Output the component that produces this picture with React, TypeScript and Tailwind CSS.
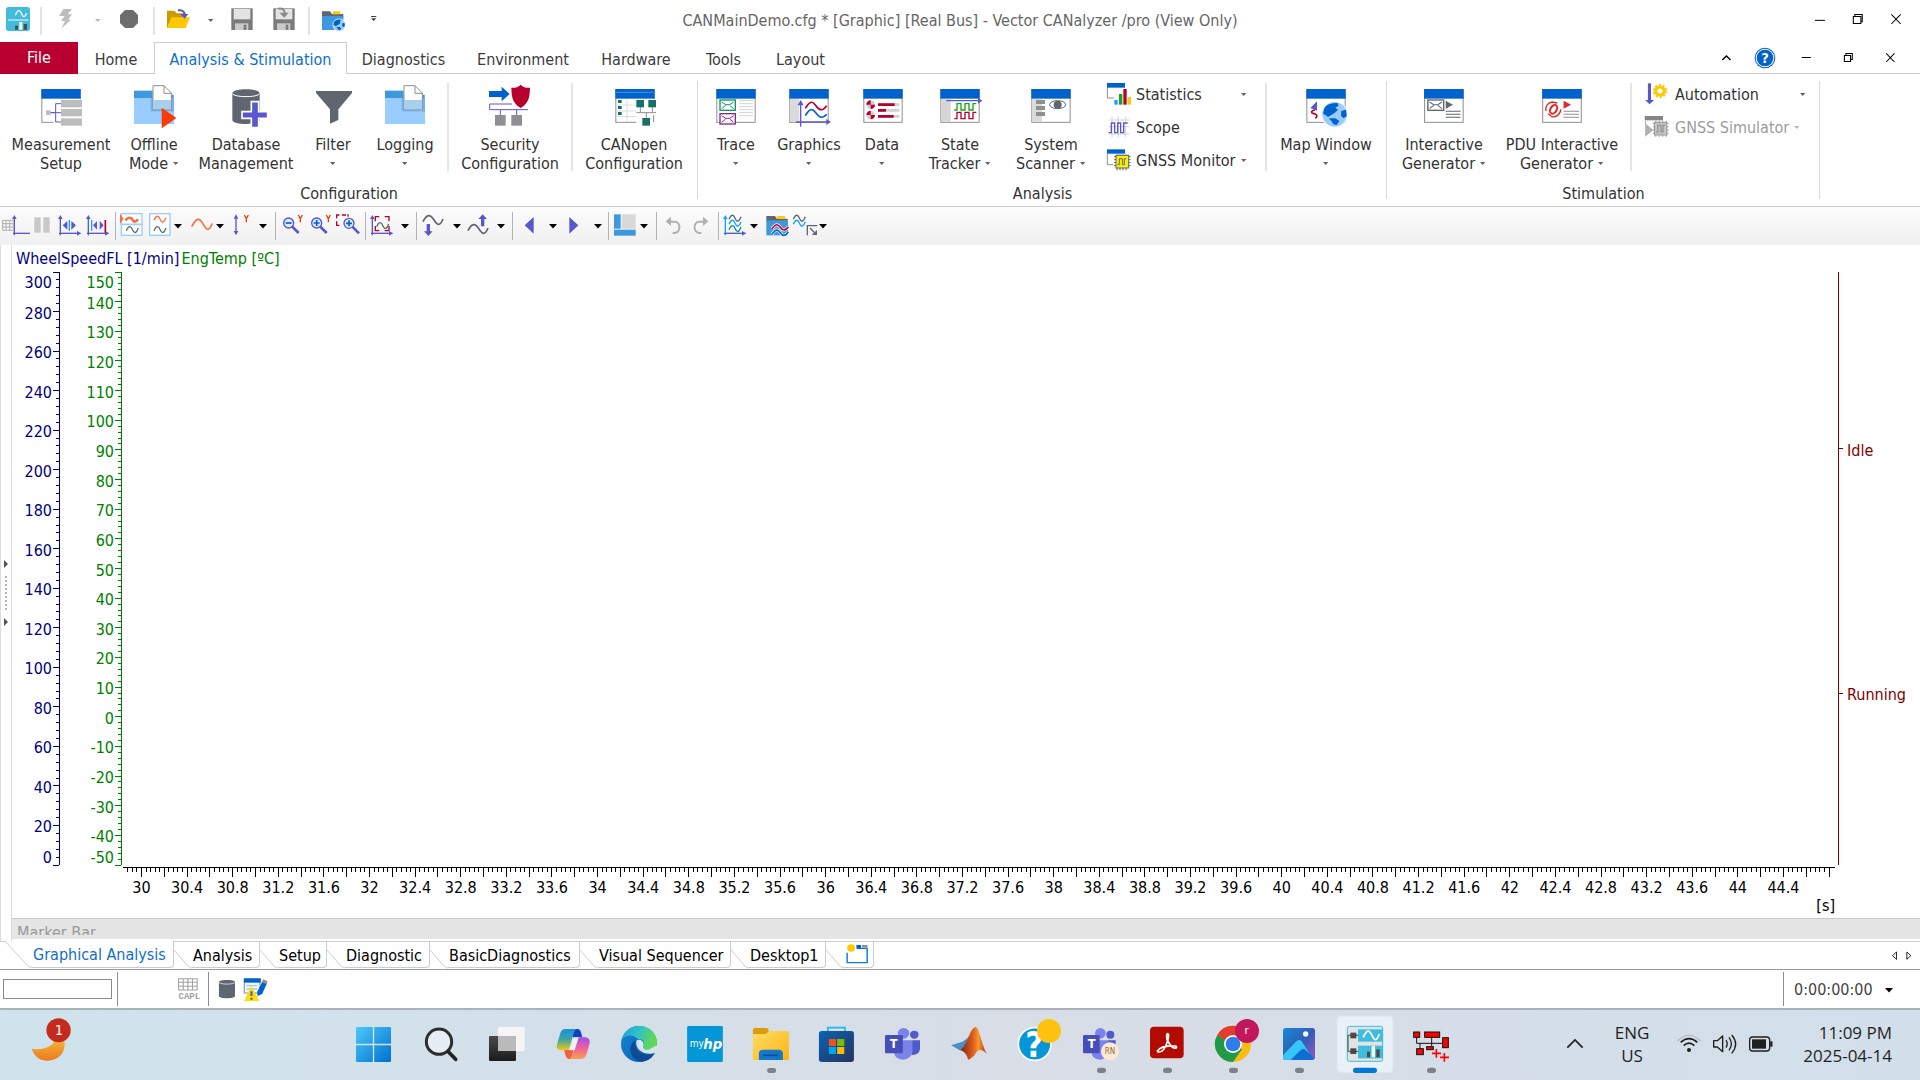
import React from "react";

type Kids = { children?: React.ReactNode };

const BLUE = "#0062cc";
const VIOLET = "#5a57cc";
const GRAY = "#8f8f8f";
const SLATE = "#5f6670";
const RED = "#b8002e";
const SKY = "#99ccff";
const MID = "#3d98de";

/* Icon artwork lives on a few shared drawing sheets, three units to a pixel. */
const SHEETS = {
  a: [0, 0, 3],
  b: [440, 0, 3],
  c: [900, 0, 3],
  d: [1380, 0, 2.904],
  e: [0, 780, 2.8],
  f: [560, 840, 2.8],
  g: [1000, 900, 3],
  h: [1480, 840, 3],
  i: [340, 1005, 3],
} as const;

function Art({ at, on, label, children }: Kids & { at: number[]; on: keyof typeof SHEETS; label?: React.ReactNode }) {
  const [x, y, w, h] = at;
  const [ox, oy, k] = SHEETS[on];
  return (
    <svg width={w} height={h} viewBox={`${(x - ox) * 3} ${(y - oy) * 3} ${w * 3} ${h * 3}`} className="block shrink-0" aria-hidden="true">
      <g transform={k === 3 ? undefined : `scale(${3 / k} 1)`}>{children}</g>
      {label}
    </svg>
  );
}

const P = (p: { d: string; f?: string; s?: string; w?: number; round?: boolean }) => (
  <path
    d={p.d}
    fill={p.f ?? "none"}
    stroke={p.s ?? "none"}
    strokeWidth={p.w ?? 3}
    strokeLinecap={p.round ? "round" : "butt"}
    strokeLinejoin={p.round ? "round" : "miter"}
  />
);
const R = (p: { x: number; y: number; w: number; h: number; f?: string; s?: string; sw?: number; rx?: number }) => (
  <rect x={p.x} y={p.y} width={p.w} height={p.h} fill={p.f ?? "none"} stroke={p.s} strokeWidth={p.sw ?? 3} rx={p.rx} />
);
const Win = ({ x, w = 118 }: { x: number; w?: number }) => (
  <>
    <R x={x + 1.5} y={270} w={w - 3} h={97} f="#fff" s={GRAY} />
    <R x={x} y={267} w={w} h={29} f={BLUE} />
  </>
);
const Globe = ({ cx, cy, r }: { cx: number; cy: number; r: number }) => (
  <g transform={`translate(${cx} ${cy}) scale(${r / 37})`}>
    <circle r="40" fill="#fff" />
    <circle r="37" fill={SKY} />
    <path d="M-31-18C-22-32-8-34 8-34L12-26 2-20 10-14 0-4-10 2-20 8-28 2-35-2ZM-18 12 2 12 14 20 6 32-4 30-10 20ZM20-10 34-14 36 6 26 12 19 4Z" fill={BLUE} />
  </g>
);

const SmallCaret = ({ pale }: { pale?: boolean }) => (
  <svg width="6" height="4" viewBox="0 0 6 4" className={pale ? "text-[#b8b8b8]" : "text-[#666666]"} aria-hidden="true">
    <path d="M0 0h5.4L2.7 3z" fill="currentColor" />
  </svg>
);
const DropCaret = () => (
  <svg width="8" height="5" viewBox="0 0 8 5" aria-hidden="true">
    <path d="M0 0h8L4 4.4z" fill="#000" />
  </svg>
);

/* ---------- title bar ---------- */

const QuickSep = () => <div className="h-7 w-[2px] self-center bg-[#e3e3e3]" />;

function TitleBar() {
  return (
    <header className="grid h-[42px] grid-cols-[1fr_auto_1fr]">
      <div className="flex">
        <Art on="a" at={[0, 0, 40, 42]}>
          <R x={18} y={21} w={72} h={72} f="#41bcdc" rx={8} />
          <P d="M46 46c8-20 14-16 19-4s10 10 15-2" s="#fff" w={4} />
          <P d="M24 60h62" s="#cfe9f0" w={4} />
          <R x={45} y={77} w={9} h={12} f="#4a4a4a" />
          <R x={58} y={66} w={9} h={23} f="#fff" />
          <R x={71} y={72} w={10} h={17} f="#4a4a4a" />
        </Art>
        <QuickSep />
        <button aria-label="Start measurement">
          <Art on="a" at={[42, 0, 46, 42]}>
            <P d="M190 27h26l-13 16h13l-12 16h9L185 85l10-22h-12l11-15h-17z" f="#bdbdbd" />
          </Art>
        </button>
        <button aria-label="Start options" className="flex w-5 items-center justify-center"><SmallCaret pale /></button>
        <button aria-label="Stop">
          <Art on="a" at={[108, 0, 45, 42]}>
            <P d="M375 30h24l15 15v24l-15 15h-24l-15-15V45z" f="#6d6d6d" />
          </Art>
        </button>
        <QuickSep />
        <button aria-label="Open">
          <Art on="a" at={[155, 0, 45, 42]}>
            <P d="M501 84V32h22l7 8h28v44z" f="#cc9a00" />
            <P d="M514 52h56l-13 32h-56z" f="#ffc800" />
            <P d="M534 31c14-1 20 4 20 14" s={VIOLET} w={6} />
            <P d="M541 42h24l-11 14z" f={VIOLET} />
          </Art>
        </button>
        <button aria-label="Recent files" className="flex w-[21px] items-center justify-center"><SmallCaret /></button>
        <button aria-label="Save">
          <Art on="a" at={[221, 0, 42, 42]}>
            <R x={694} y={25} w={64} h={65} f="#7b7b7b" />
            <R x={701} y={27} w={50} h={31} f="#e3e3e3" />
            <R x={705} y={70} w={40} h={20} f="#c9c9c9" />
            <R x={731} y={74} w={8} h={16} f="#7b7b7b" />
          </Art>
        </button>
        <button aria-label="Save as">
          <Art on="a" at={[263, 0, 45, 42]}>
            <R x={820} y={25} w={64} h={65} f="#7b7b7b" />
            <R x={827} y={27} w={50} h={31} f="#e3e3e3" />
            <R x={831} y={70} w={40} h={20} f="#c9c9c9" />
            <R x={857} y={74} w={8} h={16} f="#7b7b7b" />
            <P d="M834 26c14-2 20 3 20 14" s="#8a8a8a" w={6} />
            <P d="M838 38h28l-13 15z" f="#8a8a8a" />
          </Art>
        </button>
        <QuickSep />
        <button aria-label="Online workspace">
          <Art on="a" at={[310, 0, 48, 42]}>
            <P d="M966 34h24l6 8h34v10h-64z" f={SLATE} />
            <R x={998} y={34} w={23} h={9} f="#ffc800" />
            <R x={966} y={48} w={64} h={42} f={MID} />
            <Globe cx={1017} cy={75} r={18} />
          </Art>
        </button>
        <button aria-label="Customize toolbar">
          <Art on="a" at={[358, 0, 30, 42]}>
            <R x={1113} y={48} w={16} h={3} f="#444" />
            <P d="M1113 55h16l-8 8z" f="#444" />
          </Art>
        </button>
      </div>
      <h1 className="self-center text-base text-[#666666]">CANMainDemo.cfg * [Graphic] [Real Bus] - Vector CANalyzer /pro (View Only)</h1>
      <div className="flex justify-end">
        <button aria-label="Minimize"><Art on="d" at={[1801, 0, 38, 42]}><P d="M1263 61h29" s="#000" /></Art></button>
        <button aria-label="Restore">
          <Art on="d" at={[1839, 0, 38, 42]}><P d="M1374.500 49.500h22v21h-22zM1379 49v-5.500h21.500v22H1397" s="#000" /></Art>
        </button>
        <button aria-label="Close"><Art on="d" at={[1877, 0, 43, 42]}><P d="M1485 43l27 29M1512 43l-27 29" s="#000" /></Art></button>
      </div>
    </header>
  );
}

/* ---------- ribbon tabs ---------- */

const TABS = [
  { t: "Diagnostics", c: "w-[113px]" },
  { t: "Environment", c: "w-[126px]" },
  { t: "Hardware", c: "w-[100px]" },
  { t: "Tools", c: "w-[75px]" },
  { t: "Layout", c: "w-[79px]" },
];

function TabRow() {
  return (
    <nav className="flex h-8 text-base text-[#3b3b3b]">
      <button className="w-[78px] bg-[#b70030] text-white">File</button>
      <button className="w-[76px] border-b border-[#cfcfcf] pt-1">Home</button>
      <button className="w-[193px] border border-b-0 border-[#cfcfcf] pt-[2px] text-[#0f6fc9]">Analysis &amp; Stimulation</button>
      {TABS.map((x) => (
        <button key={x.t} className={`border-b border-[#cfcfcf] pt-1 ${x.c}`}>{x.t}</button>
      ))}
      <div className="flex flex-1 justify-end border-b border-[#cfcfcf]">
        <button aria-label="Collapse ribbon"><Art on="d" at={[1708, 42, 38, 31]}><P d="M994 180l12-12 12 12" s="#000" w={4} /></Art></button>
        <button aria-label="Help">
          <Art on="d" at={[1746, 42, 38, 31]} label={<text x={1155} y={190} textAnchor="middle" fontSize="44" fontWeight="bold" fill="#fff">?</text>}>
            <ellipse cx="1118" cy="174" rx="30" ry="31" fill={BLUE} />
            <ellipse cx="1118" cy="174" rx="25.500" ry="26.500" fill={BLUE} stroke="#fff" strokeWidth="3" />
          </Art>
        </button>
        <button aria-label="Minimize window"><Art on="d" at={[1784, 42, 43, 31]}><P d="M1225 172.500h26" s="#000" /></Art></button>
        <button aria-label="Restore window">
          <Art on="d" at={[1827, 42, 42, 31]}><P d="M1348.500 166.500h18v18h-18zM1353 166v-5.500h18.500v18H1367" s="#000" /></Art>
        </button>
        <button aria-label="Close window"><Art on="d" at={[1869, 42, 51, 31]}><P d="M1470 160l24 26M1494 160l-24 26" s="#000" /></Art></button>
      </div>
    </nav>
  );
}

/* ---------- ribbon ---------- */

function Big({ cls, top, bottom, caret, children }: Kids & { cls: string; top: string; bottom?: string; caret?: boolean }) {
  return (
    <button className={`flex flex-col items-center pt-[10px] text-base leading-[19px] whitespace-nowrap ${cls}`}>
      {children}
      <span className="mt-[7px]">{top}</span>
      <span className="flex h-[19px] items-center gap-[5px]">{bottom}{caret && <SmallCaret />}</span>
    </button>
  );
}
const Sep = ({ cls }: { cls: string }) => <div className={`mt-[9px] h-[88px] w-[2px] bg-[#e5e5e5] ${cls}`} />;
function Group({ name, children }: Kids & { name: string }) {
  return (
    <section className="relative flex flex-col after:absolute after:right-0 after:top-[7px] after:h-[118px] after:w-px after:bg-[#dadada]">
      <div className="flex h-[108px]">{children}</div>
      <h2 className="text-center text-base leading-6">{name}</h2>
    </section>
  );
}
function Small({ label, caret, pale, cls, children }: Kids & { label: string; caret?: boolean; pale?: boolean; cls: string }) {
  return (
    <button className={`flex h-[33px] items-center gap-[3px] text-base whitespace-nowrap ${cls} ${pale ? "text-[#9b9b9b]" : ""}`} disabled={pale}>
      {children}
      {label}
      {caret && <span className="ml-auto"><SmallCaret pale={pale} /></span>}
    </button>
  );
}

const FolderPage = ({ x }: { x: number }) => (
  <g transform={`translate(${x} 0)`}>
    <R x={0} y={272} w={56} h={22} f={MID} />
    <R x={0} y={294} w={120} h={78} f={SKY} />
    <R x={112} y={284} w={7} h={50} f={MID} />
    <R x={50} y={294} w={70} h={40} f="#6fb4ec" />
    <P d="M57 257h33l22 22v50H57z" f="#fff" s={GRAY} />
    <R x={58} y={300} w={53} h={28} f="#a6d0ee" />
    <P d="M90 257v23h22" s={GRAY} />
  </g>
);
const Envelope = ({ x, y, c }: { x: number; y: number; c: string }) => (
  <g transform={`translate(${x} ${y})`}>
    <R x={1} y={1} w={46} h={31} f="#fff" s={c} sw={4} />
    <P d="M6 7l12 8h12l12-8M6 27l12-10M42 27L30 17" s={c} />
  </g>
);

function Ribbon() {
  return (
    <div className="flex h-[133px] border-b border-[#cfcfcf] text-[#333333]">
      <Group name="Configuration">
        <Big cls="ml-2 w-[106px]" top="Measurement" bottom="Setup">
          <Art on="a" at={[39, 84, 44, 44]}>
            <Win x={124} />
            <R x={160} y={298} w={90} h={75} f="#fff" />
            <P d="M138 338h28M183 311h-16v55h16M152 338h31" s={VIOLET} />
            <R x={138} y={331} w={14} h={14} f="#bdbdbd" />
            <R x={183} y={300} w={63} h={22} f="#bdbdbd" />
            <R x={183} y={327} w={63} h={22} f="#bdbdbd" />
            <R x={183} y={355} w={63} h={22} f="#bdbdbd" />
          </Art>
        </Big>
        <Big cls="w-20" top="Offline" bottom="Mode" caret>
          <Art on="a" at={[132, 84, 44, 44]}>
            <FolderPage x={402} />
            <P d="M485 323l44 31-44 31z" f="#ff3a00" />
          </Art>
        </Big>
        <Big cls="w-26" top="Database" bottom="Management">
          <Art on="a" at={[224, 84, 44, 44]}>
            <P d="M697 280c0-16 82-16 82 0v80c0 16-82 16-82 0z" f={SLATE} />
            <P d="M697 281c6 12 76 12 82 0" s="#fff" />
            <P d="M754 305h22v30h27v20h-27v28h-22v-28h-28v-20h28z" f={VIOLET} s="#fff" w={5} />
          </Art>
        </Big>
        <Big cls="w-[70px]" top="Filter" caret>
          <Art on="a" at={[311, 84, 44, 44]}><P d="M948 273h108v6l-41 49v32l-25 11v-43l-42-49z" f={SLATE} /></Art>
        </Big>
        <Big cls="w-[74px]" top="Logging" caret>
          <Art on="a" at={[383, 84, 44, 44]}><FolderPage x={1155} /></Art>
        </Big>
        <Sep cls="ml-[5px]" />
        <Big cls="ml-[5px] w-28" top="Security" bottom="Configuration">
          <Art on="b" at={[488, 84, 44, 44]}>
            <P d="M147 273h38v-13l24 22-24 22v-13h-38z" f={BLUE} />
            <P d="M216 312h-67v17h115M181 330v20M230 330v20" s={VIOLET} />
            <P d="M242 254c8 8 18 10 28 9-1 20 0 45-28 61-28-16-27-41-28-61 10 1 20-1 28-9z" f={RED} />
            <R x={165} y={345} w={32} h={32} f={GRAY} />
            <R x={214} y={345} w={32} h={32} f={GRAY} />
          </Art>
        </Big>
        <Sep cls="ml-[5px]" />
        <Big cls="ml-[5px] mr-2 w-[112px]" top="CANopen" bottom="Configuration">
          <Art on="b" at={[611, 84, 44, 44]}>
            <Win x={523} />
            <P d="M526 277h112" s="#4d92dd" />
            <P d="M558 298v66M528 315h60M528 333h60M528 350h60" s="#dcdcdc" />
            <R x={586} y={298} w={60} h={80} f="#fff" />
            <P d="M598 320v18M634 320v18M586 338h59M616 338v18M638 345v22" s={GRAY} />
            <R x={531} y={300} w={11} h={9} f="#167068" />
            <R x={531} y={318} w={11} h={9} f="#167068" />
            <R x={531} y={336} w={11} h={9} f="#167068" />
            <R x={586} y={300} w={23} h={22} f="#167068" />
            <R x={622} y={300} w={23} h={22} f="#167068" />
            <R x={604} y={354} w={23} h={23} f="#167068" />
          </Art>
        </Big>
      </Group>

      <Group name="Analysis">
        <Big cls="ml-[5px] w-[66px]" top="Trace" caret>
          <Art on="b" at={[714, 84, 44, 44]}>
            <Win x={829} />
            <P d="M897 302h42M897 311h42M897 320h42M897 329h42M897 338h42M897 347h42" s="#d4d4d4" />
            <Envelope x={839} y={299} c="#12935a" />
            <Envelope x={839} y={340} c="#852a8c" />
          </Art>
        </Big>
        <Big cls="w-20" top="Graphics" caret>
          <Art on="b" at={[787, 84, 44, 44]}>
            <Win x={1048} />
            <R x={1052} y={297} w={26} h={68} f="#dadada" />
            <P d="M1082 380v-66M1068 366h96" s={VIOLET} w={4} />
            <P d="M1082 300l9 16h-18zM1173 366l-14-9v18z" f={VIOLET} />
            <P d="M1096 325c12-20 20-24 30-10s20 22 34 2" s={RED} w={5} />
            <P d="M1096 347c12-20 20-24 30-10s20 22 34 6" s={BLUE} w={5} />
          </Art>
        </Big>
        <Big cls="w-[66px]" top="Data" caret>
          <Art on="b" at={[860, 84, 44, 44]}>
            <Win x={1270} />
            <circle cx="1292" cy="314" r="13" fill="#d0d0d0" />
            <circle cx="1292" cy="345" r="13" fill="#d0d0d0" />
            <P d="M1292 314v-13a13 13 0 0 0-13 13zM1292 314h13a13 13 0 0 1-13 13zM1292 345v-13a13 13 0 0 0-13 13zM1292 345h13a13 13 0 0 1-13 13z" f={RED} />
            <P d="M1314 314h64M1314 331h64M1314 349h64" s="#d0d0d0" w={8} />
            <P d="M1314 314h50M1314 331h24M1314 349h47" s={RED} w={8} />
          </Art>
        </Big>
        <Big cls="w-[90px]" top="State" bottom="Tracker" caret>
          <Art on="c" at={[939, 84, 45, 44]}>
            <Win x={124} />
            <R x={128} y={297} w={27} h={68} f="#d6d6d6" />
            <P d="M142 302h98" s={VIOLET} w={4} />
            <P d="M237 293l13 9-13 9z" f={VIOLET} />
            <P d="M166 330h8v-19h12v19h12v-19h12v19h12v-19h10" s="#12a818" w={4} />
            <P d="M166 356h8v-19h12v19h12v-19h12v19h12v-19h10" s={RED} w={4} />
          </Art>
        </Big>
        <Big cls="w-[92px]" top="System" bottom="Scanner" caret>
          <Art on="c" at={[1029, 84, 44, 44]}>
            <Win x={394} />
            <R x={398} y={297} w={28} h={68} f="#dadada" />
            <R x={408} y={300} w={27} h={12} f={GRAY} />
            <R x={408} y={318} w={27} h={12} f={GRAY} />
            <R x={408} y={336} w={27} h={12} f={GRAY} />
            <ellipse cx="473" cy="314" rx="24" ry="12" fill="#fff" stroke={SLATE} strokeWidth="3" />
            <ellipse cx="473" cy="314" rx="12" ry="12" fill={SLATE} />
          </Art>
        </Big>
        <div className="ml-[6px] pt-1">
          <Small label="Statistics" caret cls="w-36">
            <Art on="c" at={[1103, 78, 30, 33]}>
              <P d="M622 262v32h20" s={GRAY} />
              <R x={621} y={249} w={54} h={14} f={BLUE} />
              <R x={643} y={300} w={10} h={14} f="#18a0ff" />
              <R x={657} y={282} w={10} h={32} f="#12a818" />
              <R x={670} y={267} w={10} h={47} f={RED} />
              <R x={683} y={291} w={10} h={23} f="#ffc800" />
            </Art>
          </Small>
          <Small label="Scope" cls="w-36">
            <Art on="c" at={[1103, 111, 30, 33]}>
              <P d="M626 360h62M626 380h62M626 402h62M636 350v62M655 350v62M676 350v62" s="#d2d2d2" />
              <P d="M626 398h8v-29h10v29h9v-29h9v29h9v-29h12" s={VIOLET} w={4} />
            </Art>
          </Small>
          <Small label="GNSS Monitor" caret cls="w-36">
            <Art on="c" at={[1103, 144, 30, 33]}>
              <P d="M622 460v34h18" s={GRAY} />
              <R x={621} y={448} w={54} h={13} f={BLUE} />
              <P d="M642 470h50M642 479h50M642 488h50M642 497h50M651 463v48M660 463v48M669 463v48M678 463v48" s={SLATE} />
              <R x={648} y={466} w={38} h={38} f="#ffee00" s={SLATE} />
              <P d="M652 494h6v-18h9v18h6v-18h6" s={SLATE} />
            </Art>
          </Small>
        </div>
        <Sep cls="ml-[18px]" />
        <Big cls="ml-[5px] mr-[7px] w-[108px]" top="Map Window" caret>
          <Art on="c" at={[1303, 84, 44, 44]}>
            <Win x={1216} />
            <P d="M1228 324l20-20v28z" f={VIOLET} />
            <P d="M1242 330c-14 2-12 9-3 11s12 8 4 14" s={RED} w={5} />
            <Globe cx={1301} cy={343} r={37} />
          </Art>
        </Big>
      </Group>

      <Group name="Stimulation">
        <Big cls="ml-[6px] w-[102px]" top="Interactive" bottom="Generator" caret>
          <Art on="d" at={[1422, 84, 44, 44]}>
            <Win x={128} w={115} />
            <Envelope x={138} y={299} c={SLATE} />
            <P d="M191 302l21 12-21 12z" f={SLATE} />
            <P d="M191 334h43M191 343h43M191 352h43" s={SLATE} />
          </Art>
        </Big>
        <Big cls="w-[134px]" top="PDU Interactive" bottom="Generator" caret>
          <Art on="d" at={[1540, 84, 44, 44]}>
            <Win x={471} w={115} />
            <P d="M500 306c-14 3-21 14-18 27M497 350c14 3 27-6 28-22M515 309l-16-3M488 341l10 8" s="#dd2a2a" w={4} />
            <ellipse cx="504" cy="328" rx="9" ry="14" fill="none" stroke="#dd2a2a" strokeWidth="6" transform="rotate(28 504 328)" />
            <P d="M533 302l22 12-22 12z" f="#dd2a2a" />
            <P d="M533 334h45M533 343h45M533 352h45" s={GRAY} />
          </Art>
        </Big>
        <Sep cls="ml-px" />
        <div className="mr-[14px] ml-2 pt-1">
          <Small label="Automation" caret cls="w-[166px]">
            <Art on="d" at={[1640, 78, 32, 33]}>
              <R x={778} y={250} w={9} h={52} f={VIOLET} />
              <P d="M770 300h26l-13 13z" f={VIOLET} />
              <circle cx="813" cy="273" r="18" fill="none" stroke="#ffc800" strokeWidth="6" strokeDasharray="6 5.300" />
              <circle cx="813" cy="273" r="12" fill="none" stroke="#ffc800" strokeWidth="9" />
            </Art>
          </Small>
          <Small label="GNSS Simulator" caret pale cls="w-[160px]">
            <Art on="d" at={[1640, 111, 32, 33]}>
              <R x={769} y={348} w={53} h={13} f="#858585" />
              <P d="M770 370l24 20-24 20z" f="#b0b0b0" />
              <P d="M771 362v12" s="#b0b0b0" />
              <P d="M792 370h46M792 380h46M792 390h46M792 400h46M801 362v48M811 362v48M821 362v48M831 362v48" s="#9a9a9a" />
              <R x={797} y={367} w={36} h={38} f="#c4c4c4" s="#9a9a9a" />
              <P d="M801 396h6v-20h9v20h6v-20h6" s="#8a8a8a" />
            </Art>
          </Small>
        </div>
      </Group>
    </div>
  );
}

/* ---------- graphic window toolbar ---------- */

function Tool({ name, x, w, on = "a", children }: Kids & { name: string; x: number; w: number; on?: "a" | "b" }) {
  return <button aria-label={name}><Art on={on} at={[x, 207, w, 38]}>{children}</Art></button>;
}
const Drop = ({ cls }: { cls: string }) => (
  <button aria-label="More options" className={`flex items-center justify-center ${cls}`}><DropCaret /></button>
);
const ToolSep = () => <div className="h-7 w-px self-center bg-[#b4b4b4]" />;
const Axes = ({ x, c = VIOLET }: { x: number; c?: string }) => (
  <g transform={`translate(${x} 0)`}>
    <P d="M7 706v-54" s={c} w={4} />
    <P d="M7 645l7 12H0z" f={c} />
    <P d="M3 700h58" s={VIOLET} w={4} />
    <P d="M70 700l-13-7v14z" f={VIOLET} />
  </g>
);
const Lens = ({ x, y, plus }: { x: number; y: number; plus?: boolean }) => (
  <g transform={`translate(${x} ${y})`}>
    <P d="M10 10l20 20" s={VIOLET} w={8} />
    <circle r="15" fill="#dbe9fa" stroke={VIOLET} strokeWidth="4" />
    <P d={plus ? "M-9 0H9M0-9V9" : "M-9 0H9"} s={BLUE} w={5} />
  </g>
);
const YMark = ({ x, y }: { x: number; y: number }) => <P d={`M${x} ${y}l6 11v11M${x + 12} ${y}l-6 11`} s="#e8400c" w={4} />;
const wave = (x: number, y: number) => `M${x} ${y}c8 -18 14 -14 19 -2s11 10 17 -6`;

function Toolbar() {
  return (
    <div className="flex h-[38px] bg-linear-to-b from-[#fcfcfc] to-[#f0f0f0]">
      <Tool name="Legend" x={0} w={30}>
        <Axes x={36} />
        <P d="M8 661h32v30H8zM8 671h32M8 681h32M18 661v30M29 661v30" s="#b0b0b0" f="#f4f4f4" />
      </Tool>
      <Tool name="Pause" x={30} w={26}>
        <R x={103} y={652} w={19} h={46} f="#c8c8c8" />
        <R x={130} y={652} w={19} h={46} f="#c8c8c8" />
      </Tool>
      <Tool name="Fit time axis" x={56} w={28}>
        <Axes x={174} />
        <P d="M208 660v32" s="#18a0ff" w={4} />
        <P d="M202 663v26l-14-13zM214 663v26l14-13z" f={VIOLET} />
      </Tool>
      <Tool name="Time range" x={84} w={31}>
        <Axes x={258} />
        <P d="M275 660v32" s="#18a0ff" w={4} />
        <P d="M316 660v38" s={RED} w={5} />
        <P d="M291 663v26l-12-13zM299 663v26l12-13z" f={VIOLET} />
      </Tool>
      <ToolSep />
      <Tool name="Split signals" x={116} w={30}>
        <R x={364} y={641} w={62} h={65} f="#fff" s={SKY} sw={4} />
        <P d="M362 673h66" s={SKY} w={5} />
        <P d="M376 661c10-12 18-8 22-1s10 7 16-2" s="#f87040" w={8} />
        <P d="M360 641l11 15-11 15z" f="#f87040" />
        <P d={wave(379, 692)} s={SLATE} w={4} />
      </Tool>
      <Tool name="Signal layout" x={146} w={26}>
        <R x={449} y={641} w={61} h={65} f="#fff" s={SKY} sw={4} />
        <P d={wave(462, 661)} s="#f87040" w={4} />
        <P d={wave(462, 692)} s={SLATE} w={4} />
      </Tool>
      <Drop cls="w-3" />
      <Tool name="Curve style" x={184} w={30}>
        <P d="M576 678c14-24 22-26 32-8s18 28 28 2" s="#f87040" w={5} round />
      </Tool>
      <Drop cls="w-3" />
      <Tool name="Y axis" x={226} w={30}>
        <P d="M708 652v46" s={VIOLET} w={4} />
        <P d="M708 643l7 13h-14zM708 706l7-13h-14z" f={VIOLET} />
        <YMark x={733} y={645} />
      </Tool>
      <Drop cls="w-[13px]" />
      <div className="w-[6px]" />
      <ToolSep />
      <Tool name="Zoom out Y" x={276} w={30}><Lens x={866} y={669} /><YMark x={895} y={645} /></Tool>
      <Tool name="Zoom in Y" x={306} w={28}><Lens x={950} y={669} plus /><YMark x={979} y={645} /></Tool>
      <Tool name="Zoom area" x={334} w={31}>
        <P d="M1018 645h-8v10M1026 645h12M1044 650v-5h-2M1010 664v12h8" s={RED} w={4} />
        <Lens x={1047} y={670} plus />
      </Tool>
      <ToolSep />
      <Tool name="Fit window" x={366} w={33}>
        <Axes x={1110} />
        <P d="M1126 664v-14h12M1154 650h13v14M1126 678v14h12M1154 692h13v-14" s={RED} w={4} />
        <P d={wave(1130, 680)} s={SLATE} w={4} />
      </Tool>
      <Drop cls="w-3" />
      <div className="w-[5px]" />
      <ToolSep />
      <Tool name="Sample down" x={417} w={33}>
        <P d="M1269 665c12-24 22-22 31-8s18 28 29 0" s={SLATE} w={5} />
        <P d="M1280 672h10v22h8l-13 14-13-14h8z" f={VIOLET} />
      </Tool>
      <Drop cls="w-[13px]" />
      <Tool on="b" name="Sample up" x={463} w={32}>
        <P d="M84 692c12-24 22-22 31-8s18 28 29 0" s={SLATE} w={5} />
        <P d="M123 679v-22h-8l13-14 13 14h-8v22z" f={VIOLET} />
      </Tool>
      <Drop cls="w-3" />
      <div className="w-[5px]" />
      <ToolSep />
      <Tool on="b" name="Previous" x={513} w={34}><P d="M281 651v50l-27-25z" f={VIOLET} /></Tool>
      <Drop cls="w-3" />
      <Tool on="b" name="Next" x={559} w={33}><P d="M388 651v50l27-25z" f={VIOLET} /></Tool>
      <Drop cls="w-3" />
      <div className="w-1" />
      <ToolSep />
      <Tool on="b" name="Window layout" x={609} w={29}>
        <R x={522} y={643} w={20} h={43} f={MID} />
        <R x={545} y={643} w={42} h={43} f="#d9d9d9" />
        <R x={522} y={689} w={65} h={18} f={MID} />
      </Tool>
      <Drop cls="w-[11px]" />
      <div className="w-[7px]" />
      <ToolSep />
      <Tool on="b" name="Undo" x={657} w={30}>
        <P d="M690 665h14c18 0 20 32 0 34h-6" s="#b0b0b0" w={6} />
        <P d="M693 650v28l-16-14z" f="#b0b0b0" />
      </Tool>
      <Tool on="b" name="Redo" x={687} w={31}>
        <P d="M792 665h-14c-18 0-20 32 0 34h6" s="#b0b0b0" w={6} />
        <P d="M789 650v28l16-14z" f="#b0b0b0" />
      </Tool>
      <ToolSep />
      <Tool on="b" name="Signal axes" x={719} w={29}>
        <Axes x={849} c="#18a0ff" />
        <P d={wave(867, 658)} s={SLATE} w={4} />
        <P d={wave(867, 673)} s="#18a0ff" w={4} />
        <P d={wave(867, 689)} s="#0a8f7d" w={4} />
      </Tool>
      <Drop cls="w-3" />
      <Tool on="b" name="Save signals" x={760} w={31}>
        <P d="M979 648h26l6 8h32v8h-64z" f={SLATE} />
        <R x={1010} y={648} w={25} h={9} f="#ffc800" />
        <R x={979} y={661} w={65} h={45} f={MID} />
        <P d="M996 686c12-16 18-14 25-4s14 12 24-2M996 702c12-16 18-14 25-4s14 12 24-2" s="#fff" w={9} />
        <P d="M996 686c12-16 18-14 25-4s14 12 24-2" s={RED} w={5} />
        <P d="M996 702c12-16 18-14 25-4s14 12 24-2" s={BLUE} w={5} />
      </Tool>
      <Tool on="b" name="Export signals" x={791} w={28}>
        <P d={wave(1060, 658)} s={SLATE} w={4} />
        <P d={wave(1060, 673)} s="#18a0ff" w={4} />
        <P d="M1102 706v-29h30M1110 684l14 14" s={SLATE} w={4} />
        <P d="M1131 705h-16l16-15z" f={SLATE} />
      </Tool>
      <Drop cls="w-2" />
    </div>
  );
}

/* ---------- chart ---------- */

function YAxis({ lo, hi, major, color, width, pad }: { lo: number; hi: number; major: number; color: string; width: string; pad: number }) {
  const n = ((hi - lo) / major) * 5;
  return (
    <svg className={`h-full overflow-visible ${width}`} aria-label={`Axis ${lo} to ${hi}`}>
      <g stroke={color} shapeRendering="crispEdges">
        <line x1="100%" x2="100%" y1="0" y2="100%" />
        {Array.from({ length: n + 1 }, (_, i) => (
          <svg key={i} x="100%" y={`${(i / n) * 100}%`} className="overflow-visible">
            <line x1={i % 5 ? -3 : -6} x2="0" y1="0" y2="0" />
          </svg>
        ))}
      </g>
      {Array.from({ length: n / 5 + 1 }, (_, i) => (
        <svg key={i} x="100%" y={`${((i * 5) / n) * 100}%`} className="overflow-visible">
          <text x={-pad} y={i === 0 ? 16 : i === n / 5 ? -2 : 7} textAnchor="end" fontSize="16" fill={color}>{hi - i * major}</text>
        </svg>
      ))}
    </svg>
  );
}

function TimeAxis() {
  const lo = 29.838;
  const span = 15.014;
  const pos = (v: number) => `${((v - lo) / span) * 100}%`;
  const ticks = Array.from({ length: 374 }, (_, i) => i - 3);
  return (
    <svg className="h-8 w-full overflow-visible" aria-label="Time axis in seconds">
      <g stroke="#000" shapeRendering="crispEdges">
        <line x1="0" x2="100%" y1="1" y2="1" />
        {ticks.map((k) => (
          <line key={k} x1={pos(30 + k * 0.04)} x2={pos(30 + k * 0.04)} y1="1" y2={k % 5 ? 6 : 11} />
        ))}
      </g>
      {Array.from({ length: 37 }, (_, i) => (
        <text key={i} x={pos(30 + i * 0.4)} y="27" textAnchor="middle" fontSize="16" fill="#000">{Number((30 + i * 0.4).toFixed(1))}</text>
      ))}
    </svg>
  );
}

function StateAxis() {
  return (
    <svg className="h-full w-20 overflow-visible" aria-label="Bus state axis">
      <g stroke="#800000" shapeRendering="crispEdges">
        <line x1="0" x2="0" y1="0" y2="100%" />
        <line x1="0" x2="5" y1="29.8%" y2="29.8%" />
        <line x1="0" x2="5" y1="71%" y2="71%" />
      </g>
      <svg y="29.8%" className="overflow-visible"><text x="9" y="7" fontSize="16" fill="#800000">Idle</text></svg>
      <svg y="71%" className="overflow-visible"><text x="9" y="7" fontSize="16" fill="#800000">Running</text></svg>
    </svg>
  );
}

function Gutter() {
  const arrow = <svg width="4" height="8" viewBox="0 0 4 8" aria-hidden="true"><path d="M0 0l4 4-4 4z" fill="#555" /></svg>;
  return (
    <div className="flex w-3 flex-col items-center justify-center gap-2 border-x border-[#dcdcdc] pr-px">
      <button aria-label="Expand panel">{arrow}</button>
      <div className="flex flex-col gap-[2px]">
        {Array.from({ length: 9 }, (_, i) => <i key={i} className="size-[2px] bg-[#b5b5b5]" />)}
      </div>
      <button aria-label="Expand legend">{arrow}</button>
    </div>
  );
}

function Graphic() {
  return (
    <main className="flex min-h-0 flex-1">
      <Gutter />
      <div className="flex flex-1 flex-col">
        <div className="flex h-[27px] gap-[2px] pt-[2px] pl-1 text-base leading-6">
          <span className="text-[#000080]">WheelSpeedFL [1/min]</span>
          <span className="text-[#008000]">EngTemp [ºC]</span>
        </div>
        <div className="flex flex-1 pr-[2px]">
          <YAxis lo={0} hi={300} major={20} color="#000080" width="w-[47px]" pad={7} />
          <YAxis lo={-50} hi={150} major={10} color="#008000" width="w-[62px]" pad={7} />
          <div className="flex-1" />
          <StateAxis />
        </div>
        <div className="flex h-[53px] flex-col pr-[85px] pl-[111px] pt-px">
          <TimeAxis />
          <span className="self-end text-base leading-4">[s]</span>
        </div>
        <div className="mb-[2px] h-[21px] border-t border-[#c8c8c8] bg-[#e5e5e5] pl-[5px]">
          <div className="h-4 overflow-hidden pt-1 text-base leading-5 text-[#999999]">Marker Bar</div>
        </div>
      </div>
    </main>
  );
}

/* ---------- desktop tabs and status bar ---------- */

const DESKS = [
  { t: "Analysis", c: "w-[86px]" },
  { t: "Setup", c: "w-[67px]" },
  { t: "Diagnostic", c: "w-[103px]" },
  { t: "BasicDiagnostics", c: "w-[150px]" },
  { t: "Visual Sequencer", c: "w-[151px]" },
  { t: "Desktop1", c: "w-[95px]" },
];
const Slant = () => (
  <svg width="18" height="27" viewBox="0 0 18 27" className="-mb-px shrink-0" aria-hidden="true">
    <path d="M0 8l14 16q2 2 4 2" fill="none" stroke="#cdcdcd" />
  </svg>
);

function DeskTabs() {
  return (
    <nav className="flex h-[29px] border-b border-[#9a9a9a] text-base text-black">
      <div className="w-[5px] border-t border-[#cdcdcd]" />
      <button className="flex h-[27px] w-[169px] text-[#0f6fc9]">
        <svg width="28" height="27" viewBox="0 0 28 27" className="shrink-0" aria-hidden="true">
          <path d="M0 0l22 24q2 2.500 6 2.500" fill="none" stroke="#cdcdcd" />
        </svg>
        <span className="h-[27px] flex-1 rounded-br-sm border-r border-b border-[#cdcdcd] text-left leading-[28px] whitespace-nowrap">Graphical Analysis</span>
      </button>
      {DESKS.map((d) => (
        <button key={d.t} className={`flex h-[27px] border-t border-[#cdcdcd] ${d.c}`}>
          <Slant />
          <span className="h-[26px] flex-1 rounded-br-sm border-r border-b border-[#cdcdcd] pl-px text-left leading-[27px] whitespace-nowrap">{d.t}</span>
        </button>
      ))}
      <button aria-label="New desktop" className="flex h-[27px] w-12 border-t border-[#cdcdcd]">
        <Slant />
        <span className="h-[26px] flex-1 rounded-br-sm border-r border-b border-[#cdcdcd] pt-px">
          <Art on="f" at={[844, 943, 26, 24]}>
            <P d="M804 338v30h56v-43h-28" s="#0a7be0" w={4} />
            <R x={830} y={315} w={13} h={11} f={BLUE} />
            <R x={846} y={315} w={15} h={8} f={GRAY} />
            <circle cx="815" cy="324" r="11" fill="#ffc800" />
          </Art>
        </span>
      </button>
      <div className="flex flex-1 justify-end border-t border-[#cdcdcd]">
        <button aria-label="Scroll tabs left"><Art on="h" at={[1888, 942, 14, 26]}><P d="M1249.500 333v22l-12-11z" s="#000" w={2.500} /></Art></button>
        <button aria-label="Scroll tabs right"><Art on="h" at={[1902, 942, 18, 26]}><P d="M1280.500 333v22l12-11z" s="#000" w={2.500} /></Art></button>
      </div>
    </nav>
  );
}

function StatusBar() {
  return (
    <footer className="flex h-[38px] items-center">
      <input aria-label="Status" className="ml-[3px] h-5 w-[109px] border border-[#8a8a8a] bg-white px-1 text-sm" />
      <div className="ml-[5px] h-[34px] w-px bg-[#8f8f8f]" />
      <div className="ml-[57px]">
        <Art on="e" at={[175, 970, 28, 38]} label={<text x={568} y={658} textAnchor="middle" fontSize="27" fontFamily="Liberation Mono" fontWeight="bold" fill="#a2a2a2">CAPL</text>}>
          <P d="M500 596h52v34h-52zM500 607h52M500 619h52M513 596v34M526 596v34M539 596v34" s="#a2a2a2" w={3} />
        </Art>
      </div>
      <div className="ml-[5px] h-[34px] w-px bg-[#8f8f8f]" />
      <div className="ml-[6px] flex">
        <Art on="e" at={[215, 970, 26, 38]}>
          <P d="M613 606c0-8 45-8 45 0v42c0 9-45 9-45 0z" f={SLATE} />
          <P d="M613 607c4 7 41 7 45 0" s="#fff" w={2} />
        </Art>
        <Art on="e" at={[241, 970, 30, 38]}>
          <R x={684} y={597} w={44} h={42} f="#f2f7ff" s={GRAY} />
          <R x={683} y={595} w={47} h={13} f={BLUE} />
          <P d="M690 617h30M690 627h30" s={SKY} w={4} />
          <P d="M735 604l13 5-14 33-13 6-1-12z" f={BLUE} />
          <P d="M737 598l12 6-3 9-13-6z" f={GRAY} />
          <P d="M704 618l22 45h-43z" f="#ffe000" />
          <P d="M704 634v14M704 653v6" s={VIOLET} w={6} />
        </Art>
      </div>
      <div className="ml-auto h-[34px] w-px bg-[#8f8f8f]" />
      <span className="w-[100px] pt-[2px] pl-[10px] text-base text-[#444444]">0:00:00:00</span>
      <button aria-label="Time format" className="mr-[26px] flex w-[10px] justify-center pt-[2px]"><DropCaret /></button>
    </footer>
  );
}

/* ---------- taskbar ---------- */

const Dot = ({ x }: { x: number }) => <R x={x} y={503} w={27} h={16} f="#7c8287" rx={8} />;
const TeamsLogo = ({ x }: { x: number }) => (
  <g transform={`translate(${x} 0)`}>
    <circle cx="82" cy="584" r="12" fill="#5059c9" />
    <circle cx="52" cy="580" r="16" fill="#7b83eb" />
    <P d="M74 601h24v26q-2 18-24 18z" f="#5059c9" />
    <P d="M26 601h51v32q-3 26-27 26-22-2-24-20z" f="#7b83eb" />
    <R x={0} y={585} w={50} h={55} f="#464eb8" rx={4} />
  </g>
);
const TaskButton = ({ name, children }: Kids & { name: string }) => <button aria-label={name} className="shrink-0">{children}</button>;

function Taskbar() {
  return (
    <div className="flex h-[72px] border-t-2 border-[#a8b2ba] bg-linear-to-r from-[#cfe3ed] via-[#d8dde6] via-53% to-[#d2dfea] text-[#1f1f1f]">
      <svg width="0" height="0" className="absolute" aria-hidden="true">
        <defs>
          <linearGradient id="win" x1="0" y1="0" x2="1" y2="1"><stop offset="0" stopColor="#4cc9fb" /><stop offset="1" stopColor="#0070d0" /></linearGradient>
          <linearGradient id="moon" x1="0" y1="0" x2="0" y2="1"><stop offset="0" stopColor="#f2b73a" /><stop offset="1" stopColor="#ee7a1e" /></linearGradient>
          <linearGradient id="cop1" x1="0" y1="0" x2="0" y2="1"><stop offset="0" stopColor="#1a8fe6" /><stop offset="0.500" stopColor="#3fa6a0" /><stop offset="1" stopColor="#f4c811" /></linearGradient>
          <linearGradient id="cop2" x1="0" y1="0" x2="0" y2="1"><stop offset="0" stopColor="#a050e8" /><stop offset="0.500" stopColor="#f0609a" /><stop offset="1" stopColor="#fba04a" /></linearGradient>
          <linearGradient id="edge1" x1="0" y1="0" x2="1" y2="0.300"><stop offset="0" stopColor="#1b9fd8" /><stop offset="0.500" stopColor="#2fc2c8" /><stop offset="1" stopColor="#63d952" /></linearGradient>
          <linearGradient id="edge2" x1="0" y1="0" x2="1" y2="1"><stop offset="0" stopColor="#1486d8" /><stop offset="1" stopColor="#0c5bb5" /></linearGradient>
          <linearGradient id="fold" x1="0" y1="0" x2="1" y2="1"><stop offset="0" stopColor="#ffdc6b" /><stop offset="1" stopColor="#fbb50c" /></linearGradient>
          <linearGradient id="store" x1="0" y1="0" x2="1" y2="1"><stop offset="0" stopColor="#0a63b4" /><stop offset="1" stopColor="#24355c" /></linearGradient>
          <linearGradient id="mat" x1="0" y1="0" x2="1" y2="0"><stop offset="0" stopColor="#7a1f16" /><stop offset="0.500" stopColor="#e0601c" /><stop offset="0.700" stopColor="#f59a2a" /><stop offset="1" stopColor="#b8201a" /></linearGradient>
          <linearGradient id="photo" x1="0" y1="0" x2="1" y2="1"><stop offset="0" stopColor="#1489dd" /><stop offset="0.500" stopColor="#2f5fb4" /><stop offset="1" stopColor="#9a55c8" /></linearGradient>
          <linearGradient id="dark" x1="0" y1="0" x2="0" y2="1"><stop offset="0" stopColor="#4a4a4a" /><stop offset="1" stopColor="#1c1c1c" /></linearGradient>
        </defs>
      </svg>
      <button aria-label="Weather" className="w-[340px]">
        <Art on="e" at={[0, 1010, 100, 70]} label={<text x={177} y={766} textAnchor="middle" fontSize="42" fill="#fff">1</text>}>
          <P d="M89 806c30 6 58-6 68-30l24 10c2 34-18 56-48 56-22 0-38-14-44-36z" f="url(#moon)" />
          <ellipse cx="164" cy="751" rx="34" ry="36" fill="#c42b1c" />
        </Art>
      </button>
      <TaskButton name="Start">
        <Art on="i" at={[340, 1010, 66, 70]}>
          <R x={48} y={66} w={105} h={105} f="url(#win)" rx={4} />
          <P d="M100.500 64v109M46 118.500h109" s="#d3e4ef" w={4} />
        </Art>
      </TaskButton>
      <TaskButton name="Search">
        <Art on="i" at={[406, 1010, 66, 70]}>
          <circle cx="297" cy="110" r="38" fill="#e4eef4" stroke="#2d2d2d" strokeWidth="9" />
          <P d="M325 140l22 23" s="#222" w={11} round />
        </Art>
      </TaskButton>
      <TaskButton name="Task view">
        <Art on="i" at={[472, 1010, 66, 70]}>
          <R x={447} y={93} w={81} h={75} f="url(#dark)" rx={4} />
          <R x={474} y={66} w={80} h={72} f="#f5f5f5" rx={4} />
          <R x={474} y={93} w={54} h={45} f="#bababa" />
        </Art>
      </TaskButton>
      <TaskButton name="Copilot">
        <Art on="i" at={[538, 1010, 66, 70]}>
          <P d="M702 72h10q8 0 11 10l4 15h-30z" f="#1140c4" />
          <P d="M672 134h28l-6 28h-8q-7-2-9-10z" f="#f2603c" />
          <P d="M676 72h34q-7 4-10 14l-10 38q-3 12-14 12h-15q-14-2-10-18l10-34q4-12 15-12z" f="url(#cop1)" />
          <P d="M722 162h-34q7-4 10-14l10-38q3-13 14-13h15q14 2 12 18l-10 34q-5 13-17 13z" f="url(#cop2)" />
          <P d="M700 98l16-1-12 38-16 1z" f="#e8f0f8" />
        </Art>
      </TaskButton>
      <TaskButton name="Edge">
        <Art on="i" at={[604, 1010, 66, 70]}>
          <circle cx="897" cy="117" r="54" fill="url(#edge2)" />
          <P d="M845 104C854 76 874 63 897 63c32 0 54 22 54 50 0 16-14 24-28 22-12-1-18-6-14-12 6-14-2-22-14-20-26-24-46-4-50 1z" f="url(#edge1)" />
          <P d="M886 104c-30 24-12 62 20 66 18-2 30-10 38-26-20 10-44 4-56-16-2-8-4-16-2-24z" f="#0f4a94" />
          <P d="M890 106c10-6 24 2 20 16-5 8 8 13 16 12l26-14v18l-10 6c-26 10-60-10-52-38z" f="#d4e4f0" />
        </Art>
      </TaskButton>
      <TaskButton name="myHP">
        <Art on="f" at={[670, 1010, 66, 70]} label={<>
          <text x={389} y={621} fontSize="30" fill="#fff">my</text>
          <text x={430} y={626} fontSize="44" fontStyle="italic" fontWeight="bold" fill="#fff">hp</text>
        </>}>
          <R x={356} y={558} w={100} h={108} f="#0496d6" rx={4} />
        </Art>
      </TaskButton>
      <TaskButton name="File Explorer">
        <Art on="f" at={[736, 1010, 66, 70]}>
          <R x={540} y={564} w={44} h={30} f="#dd9c08" rx={6} />
          <P d="M540 582h36l10-9h50q5 0 5 5v82H540z" f="url(#fold)" />
          <P d="M557 660v-20q0-11 12-11h42q13 0 13 11v20z" f="#1377cc" />
          <P d="M569 646h42" s="#0b4c8c" w={5} />
          <R x={580} y={684} w={25} h={15} f="#7c8287" rx={7} />
        </Art>
      </TaskButton>
      <TaskButton name="Microsoft Store">
        <Art on="f" at={[802, 1010, 66, 70]}>
          <P d="M750 578v-15h48v15" s="#22b6f2" w={5} />
          <R x={725} y={573} w={98} h={93} f="url(#store)" rx={8} />
          <R x={753} y={597} w={20} h={21} f="#f35022" />
          <R x={776} y={597} w={20} h={21} f="#7fba00" />
          <R x={753} y={621} w={20} h={21} f="#00a4ef" />
          <R x={776} y={621} w={20} h={21} f="#ffb900" />
        </Art>
      </TaskButton>
      <TaskButton name="Teams">
        <Art on="f" at={[868, 1010, 66, 70]} label={<text x={1001} y={625} textAnchor="middle" fontSize="38" fontWeight="bold" fill="#fff">T</text>}>
          <TeamsLogo x={910} />
        </Art>
      </TaskButton>
      <TaskButton name="MATLAB">
        <Art on="f" at={[934, 1010, 66, 70]}>
          <P d="M1095 616l32-11 18-14-10 30-16 10z" f="#4a90c8" />
          <P d="M1119 630c20-6 28-66 44-69 12 2 16 50 32 80-14-14-24-14-30-2-8 12-16 18-22 20-4-14-10-26-24-29z" f="url(#mat)" />
        </Art>
      </TaskButton>
      <TaskButton name="HP Support">
        <Art on="g" at={[1000, 1010, 66, 70]} label={<>
          <text x={103} y={470} textAnchor="middle" fontSize="104" fontWeight="bold" fill="#fff">?</text>
          <circle cx="147" cy="393" r="36" fill="#ffc20e" />
        </>}>
          <circle cx="104" cy="432" r="49" fill="#0496d6" stroke="#fff" strokeWidth="5" />
        </Art>
      </TaskButton>
      <TaskButton name="Teams work account">
        <Art on="g" at={[1066, 1010, 66, 70]} label={<>
          <text x={275} y={445} textAnchor="middle" fontSize="38" fontWeight="bold" fill="#fff">T</text>
          <circle cx="330" cy="454" r="27" fill="#fde8d4" />
          <text x={330} y={463} textAnchor="middle" fontSize="24" fill="#8a6a4a">RN</text>
        </>}>
          <g transform="translate(0 -180)"><TeamsLogo x={249} /></g>
          <Dot x={291} />
        </Art>
      </TaskButton>
      <TaskButton name="Acrobat">
        <Art on="g" at={[1132, 1010, 66, 70]}>
          <R x={450} y={380} w={101} h={95} f="#b30b00" rx={12} />
          <P d="M473 452c8-12 32-16 54-14 8 6-4 10-12 2-12-14-18-30-14-38 6-4 6 6 2 20-6 20-16 34-26 34-4 0-6-2-4-4z" s="#fff" w={5} round />
          <Dot x={489} />
        </Art>
      </TaskButton>
      <TaskButton name="Chrome">
        <Art on="g" at={[1198, 1010, 66, 70]} label={<>
          <circle cx="741" cy="393" r="36" fill="#c2185b" />
          <text x={740} y={403} textAnchor="middle" fontSize="34" fill="#fff">r</text>
        </>}>
          <circle cx="699" cy="432" r="54" fill="#fbbc14" />
          <P d="M699 432L652 405A54 54 0 0 1 746 405z" f="#e33b2e" />
          <P d="M652 405a54 54 0 0 0 47 81l27-38-27-16z" f="#219a48" />
          <P d="M652 405L699 432V405z" f="#e33b2e" />
          <circle cx="699" cy="432" r="27" fill="#fff" />
          <circle cx="699" cy="432" r="22" fill="#2f7de9" />
          <Dot x={687} />
        </Art>
      </TaskButton>
      <TaskButton name="Photos">
        <Art on="g" at={[1264, 1010, 66, 70]}>
          <R x={849} y={384} w={96} h={96} f="url(#photo)" rx={8} />
          <P d="M849 466l40-42q8-8 16 0l34 54q-2 2-6 2h-76q-8 0-8-8z" f="#36c5f8" />
          <P d="M872 480l28-28q7-8 14-4l28 26q-2 6-8 6z" f="#0a6fd0" />
          <circle cx="917" cy="402" r="8" fill="#f4fbff" />
          <Dot x={885} />
        </Art>
      </TaskButton>
      <TaskButton name="CANalyzer">
        <Art on="g" at={[1330, 1010, 66, 70]}>
          <R x={1011} y={348} w={168} h={170} f="#e9f0f7" s="#dde5ec" rx={12} />
          <R x={1042} y={379} w={106} h={105} f="#e2e2e2" s="#41bcdc" rx={6} />
          <R x={1074} y={388} w={75} h={37} f="#41bcdc" />
          <R x={1074} y={437} w={75} h={38} f="#41bcdc" />
          <P d="M1090 412c10-24 18-24 26-6s14 18 22-4" s="#fff" w={5} />
          <P d="M1062 406h-18v48h18M1062 406h12M1062 454h12" s="#444" />
          <R x={1051} y={398} w={18} h={17} f="#4a4a4a" />
          <R x={1051} y={445} w={18} h={17} f="#4a4a4a" />
          <R x={1101} y={455} w={9} h={17} f="#4a4a4a" />
          <R x={1115} y={438} w={10} h={34} f="#fff" />
          <R x={1129} y={448} w={10} h={24} f="#4a4a4a" />
          <R x={1059} y={503} w={72} h={16} f="#0078d4" rx={8} />
        </Art>
      </TaskButton>
      <TaskButton name="CANdb++">
        <Art on="g" at={[1396, 1010, 66, 70]}>
          <P d="M1250 410v20h80M1295 410v30M1260 430v16" s="#111" />
          <R x={1241} y={396} w={18} h={16} f="#f00" s="#111" />
          <R x={1274} y={396} w={45} h={16} f="#f00" s="#111" />
          <R x={1328} y={413} w={17} h={30} f="#f00" s="#111" />
          <R x={1250} y={446} w={20} h={18} f="#f00" s="#111" />
          <R x={1280} y={440} w={20} h={9} f="#f00" s="#111" />
          <P d="M1309 447v26M1296 460h27M1333 459v26M1320 472h27" s="#f00" w={5} />
          <Dot x={1281} />
        </Art>
      </TaskButton>
      <div className="ml-auto flex pb-[2px] font-['Open_Sans',sans-serif] text-[17px] leading-[23px]">
        <button aria-label="Show hidden icons"><Art on="h" at={[1555, 1010, 40, 70]}><P d="M262 623l23-23 23 23" s="#1f1f1f" w={5} /></Art></button>
        <button className="w-[74px]">ENG<br />US</button>
        <button aria-label="Network, sound and battery" className="flex">
          <Art on="h" at={[1669, 1010, 114, 70]}>
            <circle cx="627" cy="630" r="6" fill="#1f1f1f" />
            <P d="M611 617q16-15 32 0M602 607q25-22 50 0" s="#1f1f1f" w={5} />
            <P d="M593 603q34-34 68 0" s="#b0bcc6" w={4} />
            <P d="M701 602h11l16-14v47l-16-14h-11z" s="#1f1f1f" w={4} round />
            <P d="M738 600q7 11 0 23M747 592q14 19 0 39M755 585q24 27 0 55" s="#1f1f1f" w={4} />
            <R x={809} y={591} w={60} h={42} s="#1f1f1f" sw={4} rx={9} />
            <R x={816} y={598} w={42} h={28} f="#1f1f1f" />
            <P d="M874 604v16" s="#1f1f1f" w={7} />
          </Art>
        </button>
        <button className="w-[137px] pr-7 text-right">11:09 PM<br />2025-04-14</button>
      </div>
    </div>
  );
}

export default function App() {
  return (
    <div className="flex h-screen flex-col bg-white font-['DejaVu_Sans_Condensed','Noto_Sans',sans-serif]">
      <TitleBar />
      <TabRow />
      <Ribbon />
      <Toolbar />
      <Graphic />
      <DeskTabs />
      <StatusBar />
      <Taskbar />
    </div>
  );
}
